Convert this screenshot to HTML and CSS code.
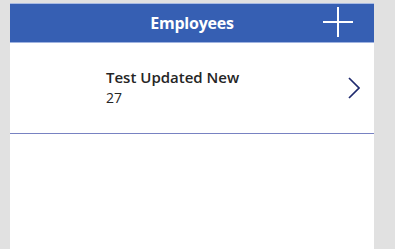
FILE: index.html
```html
<!DOCTYPE html>
<html lang="en">

<head>
    <meta charset="UTF-8">
    <title>Employees</title>
    <link rel="stylesheet" href="styles.css">
</head>

<body>
    <div class="screen">
        <div class="header">
            <span class="title">Employees</span>
            <button class="add-btn" aria-label="Add">
                <svg width="30" height="30" viewBox="0 0 30 30">
                    <path d="M15 0V30M0 15H30" stroke="#ffffff" stroke-width="2" fill="none" />
                </svg>
            </button>
        </div>
        <div class="list">
            <div class="item">
                <div class="item-text">
                    <div class="item-name">Test Updated New</div>
                    <div class="item-age">27</div>
                </div>
                <svg class="chevron" width="12" height="22" viewBox="0 0 12 22">
                    <path d="M1 1L11 11L1 21" stroke="#1f2a6e" stroke-width="1.7" fill="none" />
                </svg>
            </div>
        </div>
    </div>
</body>

</html>
```

FILE: styles.css
```css
body {
    margin: 0;
    background-color: #e1e1e1;
    font-family: "Open Sans", sans-serif;
}

.screen {
    margin: 3px 0 0 10px;
    width: 364px;
    height: 246px;
    background-color: #ffffff;
}

.header {
    height: 38px;
    background-color: #365fb3;
    border-top: 1px solid #a9bbe3;
    border-bottom: 1px solid #9fb3e0;
    display: flex;
    align-items: center;
    justify-content: center;
    position: relative;
}

.title {
    color: #ffffff;
    font-size: 16px;
    font-weight: bold;
    letter-spacing: -0.2px;
}

.add-btn {
    position: absolute;
    left: 313px;
    top: 3px;
    padding: 0;
    border: none;
    background: none;
    display: flex;
}

.item {
    height: 90px;
    border-bottom: 1px solid #7882c2;
    display: flex;
    align-items: center;
    padding: 0 14px 0 96px;
}

.item-text {
    flex: 1;
    color: #252525;
    margin-top: -2px;
}

.item-name {
    font-size: 15px;
    font-weight: 600;
    line-height: 20px;
}

.item-age {
    font-size: 14px;
    line-height: 20px;
    margin-top: 1px;
}
```
